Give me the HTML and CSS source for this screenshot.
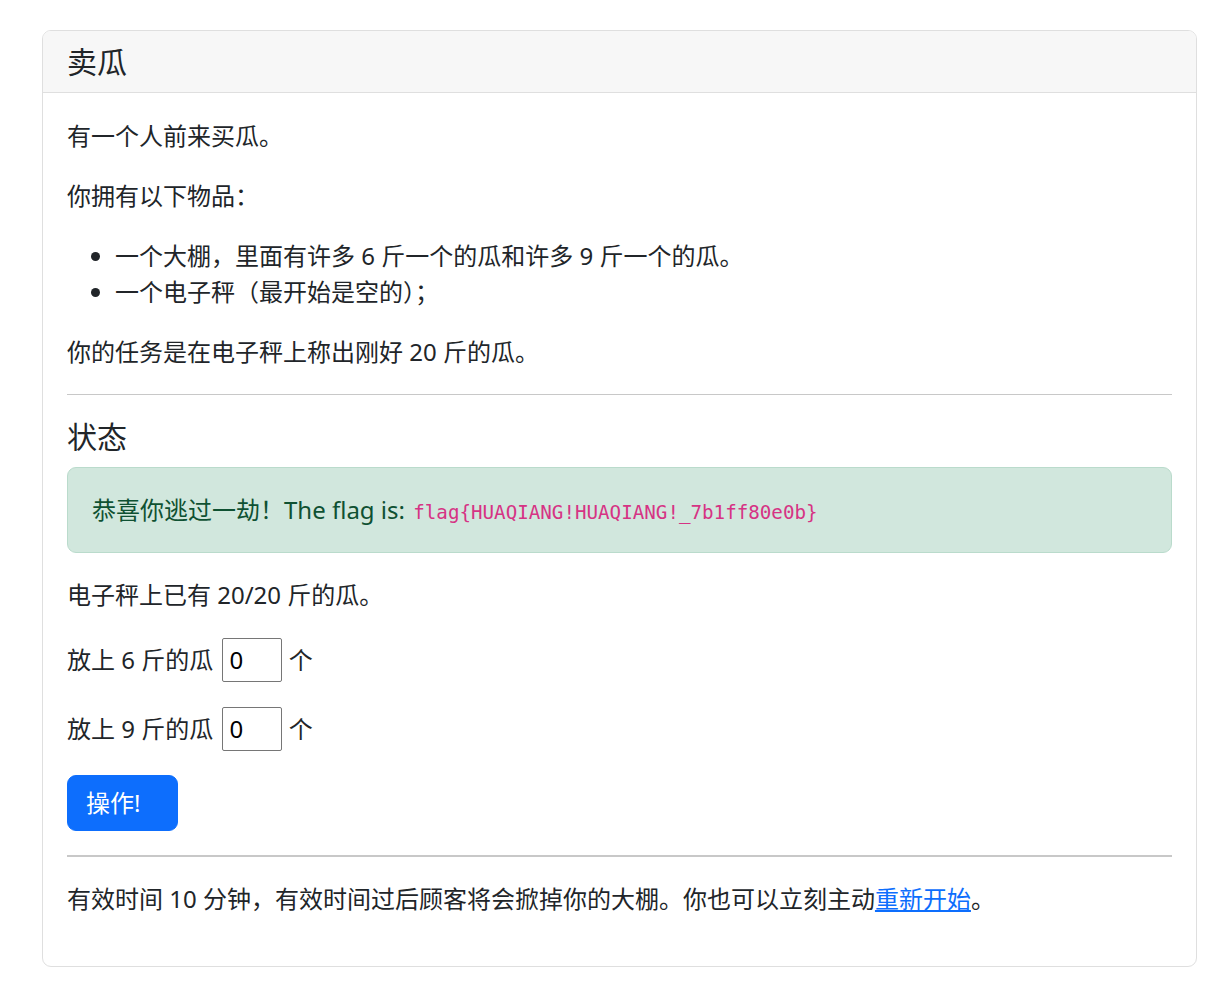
FILE: index.html
```html
<!DOCTYPE html>
<html lang="zh-CN">
<head>
<meta charset="utf-8">
<title>卖瓜</title>
<link rel="stylesheet" href="styles.css">
</head>
<body>
<div class="page">
  <div class="card">
    <div class="card-header">
      <h5 class="title">卖瓜</h5>
    </div>
    <div class="card-body">
      <p>有一个人前来买瓜。</p>
      <p>你拥有以下物品：</p>
      <ul>
        <li>一个大棚，里面有许多 6 斤一个的瓜和许多 9 斤一个的瓜。</li>
        <li>一个电子秤（最开始是空的）；</li>
      </ul>
      <p>你的任务是在电子秤上称出刚好 20 斤的瓜。</p>
      <hr class="rule">
      <h5 class="subtitle">状态</h5>
      <div class="alert">恭喜你逃过一劫！The flag is: <code class="flag">flag{HUAQIANG!HUAQIANG!_7b1ff80e0b}</code></div>
      <p>电子秤上已有 20/20 斤的瓜。</p>
      <form class="form">
        <p class="row">放上 6 斤的瓜 <input class="num" type="text" value="0"> 个</p>
        <p class="row">放上 9 斤的瓜 <input class="num" type="text" value="0"> 个</p>
        <button type="button" class="btn">操作!</button>
      </form>
      <hr class="rule thick">
      <p>有效时间 10 分钟，有效时间过后顾客将会掀掉你的大棚。你也可以立刻主动<a href="#" class="link">重新开始</a>。</p>
    </div>
  </div>
</div>
</body>
</html>
```

FILE: styles.css
```css
html, body {
  margin: 0;
  padding: 0;
  background: #fff;
}
body {
  font-family: "Noto Sans", "Noto Sans CJK SC", sans-serif;
  font-size: 24px;
  line-height: 1.5;
  color: #212529;
}
.page {
  padding: 30px 22px 24px 42px;
}
.card {
  border: 1px solid #dfdfdf;
  border-radius: 9px;
  background: #fff;
  overflow: hidden;
}
.card-header {
  background: #f7f7f7;
  border-bottom: 1px solid #dfdfdf;
  padding: 13px 24px 12px 24px;
}
.title, .subtitle {
  font-size: 30px;
  font-weight: 400;
  line-height: 1.2;
  margin: 0;
}
.subtitle {
  margin-bottom: 12px;
}
.card-body {
  padding: 25px 24px 25px 24px;
}
p {
  margin: 0 0 24px 0;
}
ul {
  margin: 0 0 24px 0;
  padding-left: 48px;
}
.rule {
  border: 0;
  border-top: 1px solid #c8c8c8;
  margin: 24px 0;
  height: 0;
}
.rule.thick {
  border-top: 2px solid #c8c8c8;
}
.alert {
  background: #d1e7dd;
  border: 1px solid #badbcc;
  color: #0f5132;
  border-radius: 9px;
  padding: 24px;
  margin-bottom: 24px;
}
.flag {
  font-family: "DejaVu Sans Mono", "Liberation Mono", monospace;
  font-size: 19.2px;
  color: #d63384;
  margin-left: 2px;
}
.form {
  margin: 0;
}
.row {
  display: flex;
  align-items: center;
  white-space: pre;
  height: 45px;
}
.num {
  box-sizing: border-box;
  width: 60px;
  height: 44px;
  margin-left: 3px;
  border: 1px solid #767676;
  border-radius: 2px;
  padding: 0 6px;
  font-family: "Noto Sans", sans-serif;
  font-size: 24px;
  color: #000;
  background: #fff;
}
.btn {
  display: block;
  box-sizing: border-box;
  width: 111px;
  height: 56px;
  background: #0d6efd;
  color: #fff;
  border: 1px solid #0d6efd;
  border-radius: 9px;
  font-family: "Noto Sans", "Noto Sans CJK SC", sans-serif;
  font-size: 24px;
  line-height: 1.5;
  padding: 9px 18px;
  text-align: left;
}
.link {
  color: #0d6efd;
  text-decoration: underline;
}
```
